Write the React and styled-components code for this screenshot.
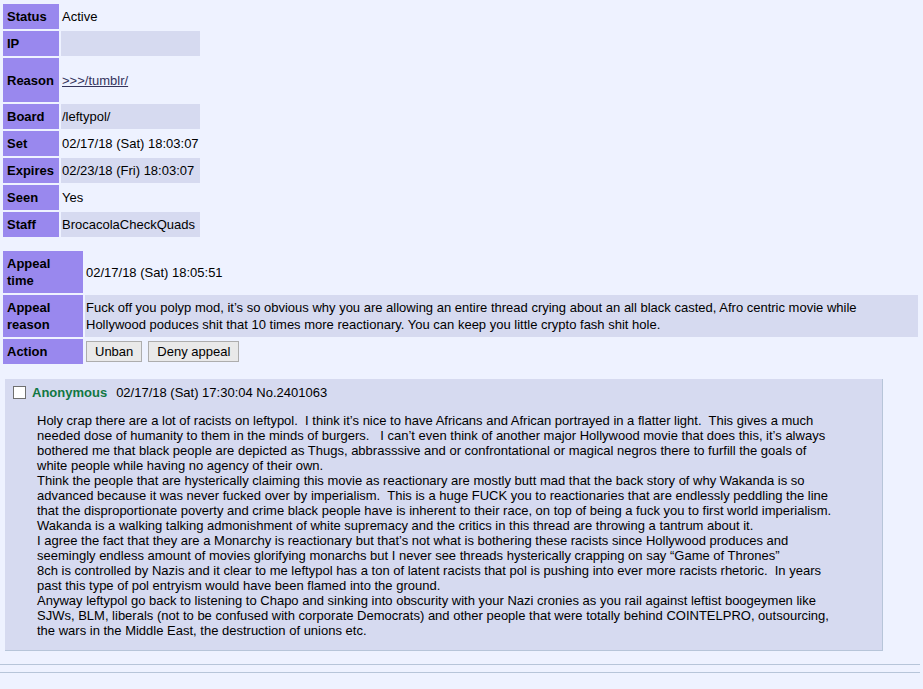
import React from 'react';
import styled, { createGlobalStyle } from 'styled-components';

const GlobalStyle = createGlobalStyle`
  html, body {
    margin: 0;
    background: #eef2ff;
  }
  body {
    color: #000;
    font-family: Arial, "Liberation Sans", Helvetica, sans-serif;
    font-size: 13px;
  }
`;

const Page = styled.div`
  padding: 2px 0 20px 1px;
`;

const BanTable = styled.table`
  border-spacing: 2px;
  line-height: 17px;
  width: ${p => p.width || 'auto'};
  margin-top: ${p => p.gap || '0'};
  tr:nth-child(even) td {
    background: #d6daf0;
  }
`;

const Head = styled.th`
  background: #9988ee;
  padding: 4px;
  text-align: left;
  font-weight: bold;
  width: ${p => p.width || 'auto'};
  vertical-align: middle;
`;

const Cell = styled.td`
  padding: ${p => (p.compact ? '2px 1px' : '4px 1px')};
  height: ${p => p.height || 'auto'};
  vertical-align: middle;
`;

const BoardLink = styled.a`
  color: #34345c;
  text-decoration: underline;
`;

const Actions = styled.div`
  display: flex;
  gap: 6px;
`;

const Button = styled.button`
  height: 21px;
  padding: 0 8px;
  font-family: Arial, "Liberation Sans", sans-serif;
  font-size: 13px;
  color: #000;
  background: #e9e9e9;
  border: 1px solid #adadad;
  border-radius: 0;
  cursor: pointer;
  &:hover {
    background: #e5f1fb;
    border-color: #0078d7;
  }
`;

const Post = styled.div`
  box-sizing: border-box;
  width: 878px;
  margin: 13px 0 0 4px;
  padding: 6px 0 8px 8px;
  background: #d6daf0;
  border-style: none solid solid none;
  border-width: 1px;
  border-color: #b7c5d9;
`;

const Intro = styled.div`
  display: flex;
  align-items: center;
  height: 15px;
  line-height: 15px;
`;

const Check = styled.input`
  appearance: none;
  box-sizing: border-box;
  width: 13px;
  height: 13px;
  margin: 0 6px 0 0;
  background: #fff;
  border: 1px solid #6f6f6f;
`;

const Name = styled.span`
  color: #117743;
  font-weight: bold;
  margin-right: 9px;
`;

const Body = styled.div`
  margin: 13px 0 0 24px;
  padding-bottom: 4px;
  line-height: 15px;
  white-space: pre;
`;

const Rule = styled.hr`
  border: none;
  border-top: 1px solid #b7c5d9;
  height: 0;
  width: 920px;
  margin: ${p => p.top || '0'} 0 0 -1px;
`;

const banRows = [
  ['Status', 'Active'],
  ['IP', ''],
  ['Reason', <BoardLink href="#">&gt;&gt;&gt;/tumblr/</BoardLink>, '36px'],
  ['Board', '/leftypol/'],
  ['Set', '02/17/18 (Sat) 18:03:07'],
  ['Expires', '02/23/18 (Fri) 18:03:07'],
  ['Seen', 'Yes'],
  ['Staff', 'BrocacolaCheckQuads'],
];

const postText = [
  'Holy crap there are a lot of racists on leftypol.  I think it\u2019s nice to have Africans and African portrayed in a flatter light.  This gives a much',
  'needed dose of humanity to them in the minds of burgers.   I can\u2019t even think of another major Hollywood movie that does this, it\u2019s always',
  'bothered me that black people are depicted as Thugs, abbrasssive and or confrontational or magical negros there to furfill the goals of',
  'white people while having no agency of their own.',
  'Think the people that are hysterically claiming this movie as reactionary are mostly butt mad that the back story of why Wakanda is so',
  'advanced because it was never fucked over by imperialism.  This is a huge FUCK you to reactionaries that are endlessly peddling the line',
  'that the disproportionate poverty and crime black people have is inherent to their race, on top of being a fuck you to first world imperialism.',
  'Wakanda is a walking talking admonishment of white supremacy and the critics in this thread are throwing a tantrum about it.',
  'I agree the fact that they are a Monarchy is reactionary but that\u2019s not what is bothering these racists since Hollywood produces and',
  'seemingly endless amount of movies glorifying monarchs but I never see threads hysterically crapping on say \u201cGame of Thrones\u201d',
  '8ch is controlled by Nazis and it clear to me leftypol has a ton of latent racists that pol is pushing into ever more racists rhetoric.  In years',
  'past this type of pol entryism would have been flamed into the ground.',
  'Anyway leftypol go back to listening to Chapo and sinking into obscurity with your Nazi cronies as you rail against leftist boogeymen like',
  'SJWs, BLM, liberals (not to be confused with corporate Democrats) and other people that were totally behind COINTELPRO, outsourcing,',
  'the wars in the Middle East, the destruction of unions etc.',
].join('\n');

export default function App() {
  return (
    <Page>
      <GlobalStyle />
      <BanTable>
        <tbody>
          {banRows.map(([label, value, height]) => (
            <tr key={label}>
              <Head width="48px">{label}</Head>
              <Cell height={height}>{value}</Cell>
            </tr>
          ))}
        </tbody>
      </BanTable>

      <BanTable width="919px" gap="10px">
        <tbody>
          <tr>
            <Head width="72px">Appeal time</Head>
            <Cell>02/17/18 (Sat) 18:05:51</Cell>
          </tr>
          <tr>
            <Head width="72px">Appeal reason</Head>
            <Cell>
              Fuck off you polyp mod, it’s so obvious why you are allowing an entire thread crying about an all black casted, Afro centric movie while Hollywood poduces shit that 10 times more reactionary. You can keep you little crypto fash shit hole.
            </Cell>
          </tr>
          <tr>
            <Head width="72px">Action</Head>
            <Cell compact>
              <Actions>
                <Button>Unban</Button>
                <Button>Deny appeal</Button>
              </Actions>
            </Cell>
          </tr>
        </tbody>
      </BanTable>

      <Post>
        <Intro>
          <Check type="checkbox" />
          <Name>Anonymous</Name>
          <span>02/17/18 (Sat) 17:30:04 No.2401063</span>
        </Intro>
        <Body>{postText}</Body>
      </Post>

      <Rule top="13px" />
      <Rule top="7px" />
    </Page>
  );
}
